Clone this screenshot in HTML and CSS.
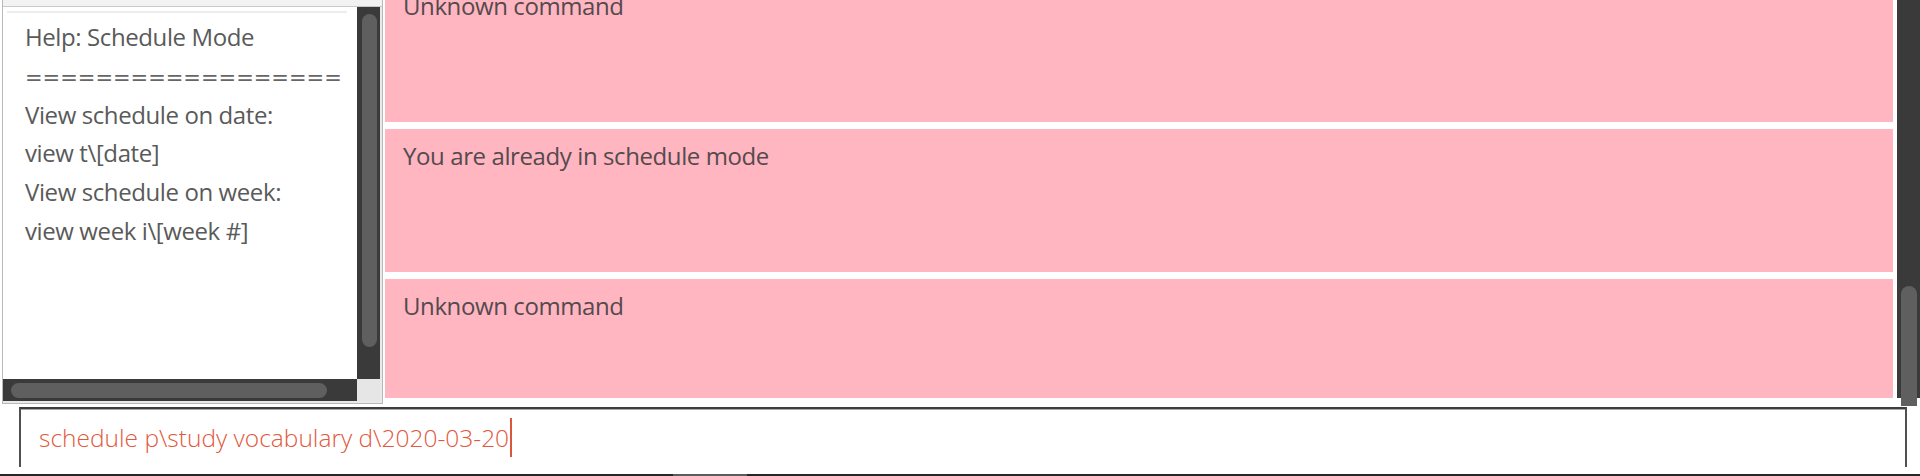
FILE: index.html
```html
<!DOCTYPE html>
<html>
<head>
<meta charset="utf-8">
<link rel="stylesheet" href="styles.css">
</head>
<body>
<div class="app">
  <div class="main">
    <div class="left">
      <div class="help-box">
        <div class="help-top"></div>
        <div class="help-area">
          <div class="help-row">
            <div class="help-text">Help: Schedule Mode
<span class="rule">==================</span>
View schedule on date:
view t\[date]
View schedule on week:
view week i\[week #]</div>
            <div class="vscroll"><div class="vthumb"></div></div>
          </div>
          <div class="hrow">
            <div class="hscroll"><div class="hthumb"></div></div>
            <div class="corner"></div>
          </div>
        </div>
      </div>
    </div>
    <div class="right">
      <div class="list">
        <div class="list-inner">
          <div class="card">Unknown command</div>
          <div class="card">You are already in schedule mode</div>
          <div class="card">Unknown command</div>
        </div>
      </div>
      <div class="rscroll"><div class="rthumb"></div></div>
    </div>
  </div>
  <div class="cmd-row">
    <div class="cmd"><span class="cmd-text">schedule p\study vocabulary d\2020-03-20</span><span class="caret"></span></div>
  </div>
  <div class="bottom-bar"><div class="bthumb"></div></div>
</div>
</body>
</html>
```
FILE: styles.css
```css
html, body {
  margin: 0;
  padding: 0;
  background: #ffffff;
}
body {
  width: 1920px;
  height: 476px;
  overflow: hidden;
  font-family: "Open Sans", "Noto Sans", sans-serif;
}
.app {
  display: flex;
  flex-direction: column;
  width: 1920px;
  height: 476px;
}
.main {
  display: flex;
  height: 404px;
  align-items: flex-start;
}
.left {
  width: 381px;
  height: 404px;
  padding-left: 2px;
  flex: none;
}
.help-box {
  box-sizing: border-box;
  height: 404px;
  border-left: 1px solid #b9b9b9;
  border-right: 1px solid #b9b9b9;
  border-bottom: 1px solid #b9b9b9;
  background: #e9e9e9;
  display: flex;
  flex-direction: column;
}
.help-top {
  height: 6px;
  background: #f2f2f2;
  border-bottom: 1px solid #c9c9c9;
}
.help-area {
  width: 377px;
  display: flex;
  flex-direction: column;
}
.help-row {
  display: flex;
  height: 372px;
}
.help-text {
  width: 354px;
  box-sizing: border-box;
  padding: 11px 0 0 22px;
  background: linear-gradient(#ffffff 4px, #ededed 4px, #ededed 6px, #ffffff 6px) no-repeat;
  background-position: 4px 0;
  background-size: 340px 8px;
  background-color: #ffffff;
  white-space: pre;
  overflow: hidden;
  font-size: 24px;
  letter-spacing: -0.4px;
  line-height: 38.8px;
  color: #5a5a5a;
}
.rule {
  font-family: "DejaVu Sans", sans-serif;
  font-size: 21px;
  line-height: 20px;
  letter-spacing: 0;
  color: #666666;
}
.vscroll {
  width: 23px;
  background: #3a3a3a;
  padding: 7px 0 0 5px;
  box-sizing: border-box;
}
.vthumb {
  width: 15px;
  height: 333px;
  background: #5f5f5f;
  border-radius: 8px;
}
.hrow {
  display: flex;
  height: 22px;
}
.hscroll {
  width: 354px;
  background: #3a3a3a;
  box-sizing: border-box;
  padding: 4px 0 0 8px;
}
.hthumb {
  width: 316px;
  height: 15px;
  background: #5f5f5f;
  border-radius: 8px;
}
.corner {
  width: 23px;
  background: #e6e6e6;
}
.right {
  flex: 1;
  display: flex;
  height: 398px;
}
.list {
  flex: 1;
  overflow: hidden;
  padding: 0 4px 0 2px;
}
.list-inner {
  margin-top: -21px;
  display: flex;
  flex-direction: column;
  gap: 7px;
}
.card {
  height: 143px;
  box-sizing: border-box;
  background: #ffb6c1;
  padding: 11px 0 0 18px;
  font-size: 24px;
  letter-spacing: -0.4px;
  line-height: 32px;
  color: #544a4e;
}
.rscroll {
  width: 23px;
  flex: none;
  background: #3a3a3a;
  box-sizing: border-box;
  padding: 286px 0 0 4px;
}
.rthumb {
  width: 16px;
  height: 120px;
  background: #5f5f5f;
  border-radius: 8px 8px 0 0;
}
.cmd-row {
  height: 70px;
  box-sizing: border-box;
  padding: 3px 13px 0 19px;
}
.cmd {
  height: 60px;
  box-sizing: border-box;
  border-top: 2px solid #3d3d3d;
  border-left: 2px solid #505050;
  border-right: 2px solid #505050;
  box-shadow: inset 0 1px 0 #a8a8a8;
  padding: 9px 0 0 18px;
  line-height: 40px;
  font-size: 24.5px;
  font-weight: 300;
  letter-spacing: 0px;
  color: #e2583c;
  white-space: pre;
  display: flex;
  align-items: flex-start;
}
.caret {
  display: block;
  width: 2px;
  height: 39px;
  margin-left: 1px;
  background: #d9573d;
}
.bottom-bar {
  height: 2px;
  background: #262626;
  padding-left: 673px;
}
.bthumb {
  width: 74px;
  height: 2px;
  background: #5c5c5c;
}
```
